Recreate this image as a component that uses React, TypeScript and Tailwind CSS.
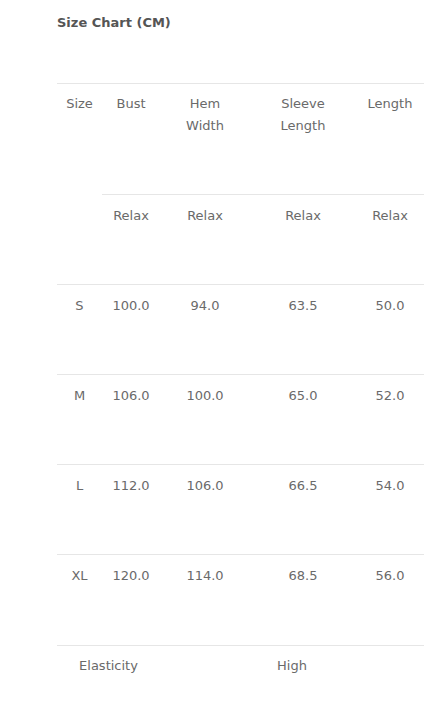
const COLS = ['w-[45px]', 'w-[58px]', 'w-[90px]', 'w-[106px]', 'w-[68px]'];

const ROWS = [
  ['S', '100.0', '94.0', '63.5', '50.0'],
  ['M', '106.0', '100.0', '65.0', '52.0'],
  ['L', '112.0', '106.0', '66.5', '54.0'],
  ['XL', '120.0', '114.0', '68.5', '56.0'],
];

const cell = 'border-t border-[#e6e6e6] px-0 pt-[9px] align-top text-center font-normal';

export default function App() {
  return (
    <main
      className="min-h-screen bg-white text-[13px] leading-[22px] text-[#6a6a6a]"
      style={{ fontFamily: '"DejaVu Sans", "Noto Sans", sans-serif' }}
    >
      <div className="pl-[57px] pt-[12px]">
        <h2 className="text-[13px] font-bold text-[#555555]">Size Chart (CM)</h2>

        <table className="mt-[49px] w-[367px] table-fixed border-collapse">
          <colgroup>
            {COLS.map((c) => (
              <col key={c} className={c} />
            ))}
          </colgroup>
          <thead>
            <tr className="h-[111px]">
              <th rowSpan={2} className={cell}>Size</th>
              <th className={cell}>Bust</th>
              <th className={cell}>
                Hem
                <br />
                Width
              </th>
              <th className={cell}>
                Sleeve
                <br />
                Length
              </th>
              <th className={cell}>Length</th>
            </tr>
            <tr className="h-[90px]">
              <th className={cell + ' pt-[10px]'}>Relax</th>
              <th className={cell + ' pt-[10px]'}>Relax</th>
              <th className={cell + ' pt-[10px]'}>Relax</th>
              <th className={cell + ' pt-[10px]'}>Relax</th>
            </tr>
          </thead>
          <tbody>
            {ROWS.map((row, r) => (
              <tr key={row[0]} className={r === ROWS.length - 1 ? 'h-[91px]' : 'h-[90px]'}>
                {row.map((v, i) => (
                  <td key={i} className={cell + ' pt-[10px]'}>
                    {v}
                  </td>
                ))}
              </tr>
            ))}
            <tr className="h-[60px]">
              <td colSpan={2} className={cell}>Elasticity</td>
              <td colSpan={3} className={cell}>High</td>
            </tr>
          </tbody>
        </table>
      </div>
    </main>
  );
}
